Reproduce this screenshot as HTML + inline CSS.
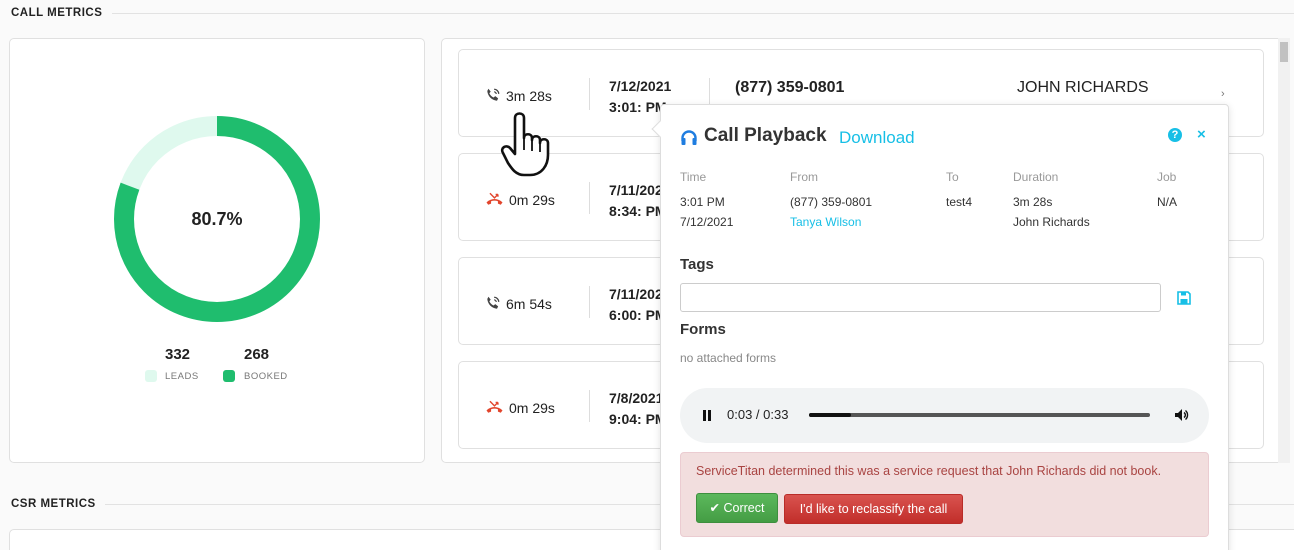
<!DOCTYPE html>
<html style="width:1294px;height:550px;overflow:hidden"><head><style>
*{box-sizing:border-box;margin:0;padding:0}
body{width:1294px;height:550px;overflow:hidden;background:#fafafa;font-family:"Liberation Sans",sans-serif;color:#222;position:relative}
.abs{position:absolute}
.sec{font-size:11.5px;font-weight:bold;letter-spacing:.5px;color:#222}
.line{height:1px;background:#e2e2e2}
.card{background:#fff;border:1px solid #e0e0e0;border-radius:5px}
.item{position:absolute;left:458px;width:806px;height:88px;background:#fff;border:1px solid #e0e0e0;border-radius:5px}
.dur{position:absolute;left:26px;top:37px;font-size:14px;color:#222}
.dur svg{vertical-align:-2px;margin-right:5px}
.vsep{position:absolute;top:28px;width:1px;height:32px;background:#ddd}
.date{position:absolute;left:150px;top:26px;font-size:14px;font-weight:bold;line-height:21px;color:#222}
.pop{position:absolute;left:660px;top:104px;width:569px;height:470px;background:#fff;border:1px solid #ddd;border-radius:4px;box-shadow:0 2px 8px rgba(0,0,0,.12)}
.lbl{font-size:12px;color:#999}
.val{font-size:12px;color:#333;line-height:20px}
</style></head><body>
<div class="abs sec" style="left:11px;top:7px">CALL METRICS</div>
<div class="abs line" style="left:112px;top:13px;width:1182px"></div>
<div class="abs card" style="left:9px;top:38px;width:416px;height:425px"></div>
<svg class="abs" style="left:114px;top:116px" width="206" height="206" viewBox="0 0 206 206">
<circle cx="103" cy="103" r="93" fill="none" stroke="#dff9ee" stroke-width="20"/>
<circle cx="103" cy="103" r="93" fill="none" stroke="#1fbd6e" stroke-width="20" stroke-dasharray="471.6 584.3" transform="rotate(-90 103 103)"/>
</svg>
<div class="abs" style="left:167px;top:209px;width:100px;text-align:center;font-size:18px;font-weight:bold;color:#222">80.7%</div>
<div class="abs" style="left:165px;top:346px;font-size:15px;font-weight:bold">332</div>
<div class="abs" style="left:244px;top:346px;font-size:15px;font-weight:bold">268</div>
<div class="abs" style="left:145px;top:370px;width:12px;height:12px;border-radius:3px;background:#dff9ee"></div>
<div class="abs" style="left:165px;top:371px;font-size:9.5px;color:#777;letter-spacing:.5px">LEADS</div>
<div class="abs" style="left:223px;top:370px;width:12px;height:12px;border-radius:3px;background:#1fbd6e"></div>
<div class="abs" style="left:244px;top:371px;font-size:9.5px;color:#777;letter-spacing:.5px">BOOKED</div>

<div class="abs sec" style="left:11px;top:498px">CSR METRICS</div>
<div class="abs line" style="left:105px;top:504px;width:1189px"></div>
<div class="abs card" style="left:9px;top:529px;width:1290px;height:40px"></div>

<div class="abs card" style="left:441px;top:38px;width:847px;height:425px"></div>
<div class="abs" style="left:1278px;top:38px;width:12px;height:425px;background:#f1f1f1"></div>
<div class="abs" style="left:1280px;top:42px;width:8px;height:20px;background:#c1c1c1"></div>

<div class="item" style="top:49px">
 <div class="dur"><svg width="16" height="16" viewBox="0 0 14 14"><path d="M3 1.5l2 2.5-1.2 1.5c.8 1.7 2 2.9 3.7 3.7L9 8l2.5 2-1 2c-4.5-.3-8-3.8-8.5-8.5z" fill="#444"/><path d="M8 2a4 4 0 0 1 4 4M8 4.3a1.8 1.8 0 0 1 1.8 1.8" stroke="#444" fill="none" stroke-width="1.1"/></svg>3m 28s</div>
 <div class="vsep" style="left:130px"></div>
 <div class="date">7/12/2021<br>3:01: PM</div>
 <div class="vsep" style="left:250px"></div>
 <div class="abs" style="left:276px;top:29px;font-size:16px;font-weight:bold;color:#222">(877) 359-0801</div>
 <div class="abs" style="left:558px;top:29px;font-size:16px">JOHN RICHARDS</div>
 <div class="abs" style="left:762px;top:38px;font-size:11px;color:#777">›</div>
</div>
<div class="item" style="top:153px">
 <div class="dur"><svg width="19" height="16" viewBox="0 0 16 14"><path d="M1 10c4-4 10-4 14 0l-1.5 2-2.5-1v-2c-2-.7-4-.7-6 0v2l-2.5 1z" fill="#e2452c"/><path d="M4 2l4 4 3-3M11 3h-2M11 3v2" stroke="#e2452c" fill="none" stroke-width="1.2"/></svg>0m 29s</div>
 <div class="vsep" style="left:130px"></div>
 <div class="date">7/11/2021<br>8:34: PM</div>
</div>
<div class="item" style="top:257px">
 <div class="dur"><svg width="16" height="16" viewBox="0 0 14 14"><path d="M3 1.5l2 2.5-1.2 1.5c.8 1.7 2 2.9 3.7 3.7L9 8l2.5 2-1 2c-4.5-.3-8-3.8-8.5-8.5z" fill="#444"/><path d="M8 2a4 4 0 0 1 4 4M8 4.3a1.8 1.8 0 0 1 1.8 1.8" stroke="#444" fill="none" stroke-width="1.1"/></svg>6m 54s</div>
 <div class="vsep" style="left:130px"></div>
 <div class="date">7/11/2021<br>6:00: PM</div>
</div>
<div class="item" style="top:361px">
 <div class="dur"><svg width="19" height="16" viewBox="0 0 16 14"><path d="M1 10c4-4 10-4 14 0l-1.5 2-2.5-1v-2c-2-.7-4-.7-6 0v2l-2.5 1z" fill="#e2452c"/><path d="M4 2l4 4 3-3M11 3h-2M11 3v2" stroke="#e2452c" fill="none" stroke-width="1.2"/></svg>0m 29s</div>
 <div class="vsep" style="left:130px"></div>
 <div class="date">7/8/2021<br>9:04: PM</div>
</div>

<div class="pop">
 <div class="abs" style="left:-7px;top:18px;width:12px;height:12px;background:#fff;border-left:1px solid #ddd;border-bottom:1px solid #ddd;transform:rotate(45deg)"></div>
 <svg class="abs" style="left:19px;top:24px" width="18" height="17" viewBox="0 0 18 17"><path d="M2.5 12V9a6.5 6.5 0 0 1 13 0v3" stroke="#1f7de0" stroke-width="2.4" fill="none"/><rect x="1.5" y="9" width="4" height="7" rx="1" fill="#1f7de0"/><rect x="12.5" y="9" width="4" height="7" rx="1" fill="#1f7de0"/></svg>
 <div class="abs" style="left:43px;top:20px;font-size:19px;font-weight:bold;color:#333">Call Playback</div>
 <div class="abs" style="left:178px;top:23px;font-size:17px;color:#17bfe6">Download</div>
 <div class="abs" style="left:507px;top:23px;width:14px;height:14px;border-radius:50%;background:#17bfe6;color:#fff;font-size:11px;font-weight:bold;text-align:center;line-height:14px">?</div>
 <div class="abs" style="left:536px;top:21px;font-size:15px;font-weight:bold;color:#17bfe6">×</div>
 <div class="abs lbl" style="left:19px;top:65px">Time</div>
 <div class="abs lbl" style="left:129px;top:65px">From</div>
 <div class="abs lbl" style="left:285px;top:65px">To</div>
 <div class="abs lbl" style="left:352px;top:65px">Duration</div>
 <div class="abs lbl" style="left:496px;top:65px">Job</div>
 <div class="abs val" style="left:19px;top:87px">3:01 PM<br>7/12/2021</div>
 <div class="abs val" style="left:129px;top:87px">(877) 359-0801<br><span style="color:#17bfe6">Tanya Wilson</span></div>
 <div class="abs val" style="left:285px;top:87px">test4</div>
 <div class="abs val" style="left:352px;top:87px">3m 28s<br>John Richards</div>
 <div class="abs val" style="left:496px;top:87px">N/A</div>
 <div class="abs" style="left:19px;top:151px;font-size:15px;font-weight:bold;color:#333">Tags</div>
 <div class="abs" style="left:19px;top:178px;width:481px;height:29px;border:1px solid #ccc;border-radius:3px"></div>
 <svg class="abs" style="left:516px;top:186px" width="14" height="14" viewBox="0 0 14 14"><path d="M1 1h10l2 2v10H1z" fill="none" stroke="#17bfe6" stroke-width="1.6"/><rect x="4" y="1.5" width="5" height="3" fill="#17bfe6"/><rect x="3.5" y="8" width="7" height="4.5" fill="#17bfe6"/></svg>
 <div class="abs" style="left:19px;top:216px;font-size:15px;font-weight:bold;color:#333">Forms</div>
 <div class="abs" style="left:19px;top:246px;font-size:12px;color:#888">no attached forms</div>
 <div class="abs" style="left:19px;top:283px;width:529px;height:55px;border-radius:28px;background:#f1f3f4"></div>
 <div class="abs" style="left:42px;top:305px;width:3px;height:11px;background:#111"></div>
 <div class="abs" style="left:47px;top:305px;width:3px;height:11px;background:#111"></div>
 <div class="abs" style="left:66px;top:302px;font-size:13px;color:#222">0:03 / 0:33</div>
 <div class="abs" style="left:148px;top:308px;width:341px;height:4px;border-radius:2px;background:#555"></div>
 <div class="abs" style="left:148px;top:308px;width:42px;height:4px;border-radius:2px;background:#111"></div>
 <svg class="abs" style="left:513px;top:303px" width="15" height="14" viewBox="0 0 15 14"><path d="M1 5h3l4-4v12l-4-4H1z" fill="#111"/><path d="M10 4.5a3 3 0 0 1 0 5M11.5 2.5a6 6 0 0 1 0 9" stroke="#111" fill="none" stroke-width="1.4"/></svg>
 <div class="abs" style="left:19px;top:347px;width:529px;height:85px;background:#f2dede;border:1px solid #ebccd1;border-radius:4px"></div>
 <div class="abs" style="left:35px;top:359px;font-size:12.5px;color:#a94442">ServiceTitan determined this was a service request that John Richards did not book.</div>
 <div class="abs" style="left:35px;top:388px;width:82px;height:30px;background:linear-gradient(#5cb85c,#449d44);border:1px solid #3e8f3e;border-radius:3px;color:#fff;font-size:12.5px;text-align:center;line-height:28px">✔ Correct</div>
 <div class="abs" style="left:123px;top:389px;width:179px;height:30px;background:linear-gradient(#d9534f,#c12e2a);border:1px solid #b92c28;border-radius:3px;color:#fff;font-size:12.5px;text-align:center;line-height:28px">I'd like to reclassify the call</div>
</div>

<svg class="abs" style="left:500px;top:110px" width="56" height="70" viewBox="0 0 56 70">
<path d="M15 8c0-6 9-6 9 0v20c0-5 8-5 8 0v2c0-5 8-5 8 0v3c0-5 8-5 8 0v12c0 10-6 20-18 20h-6c-8 0-12-6-16-12L3 43c-3-5 3-9 7-5l5 6z" fill="#fff" stroke="#111" stroke-width="2.6" stroke-linejoin="round"/>
<path d="M24 27v13M32 30v11M40 33v9" stroke="#111" stroke-width="1.8"/>
</svg>
</body></html>
